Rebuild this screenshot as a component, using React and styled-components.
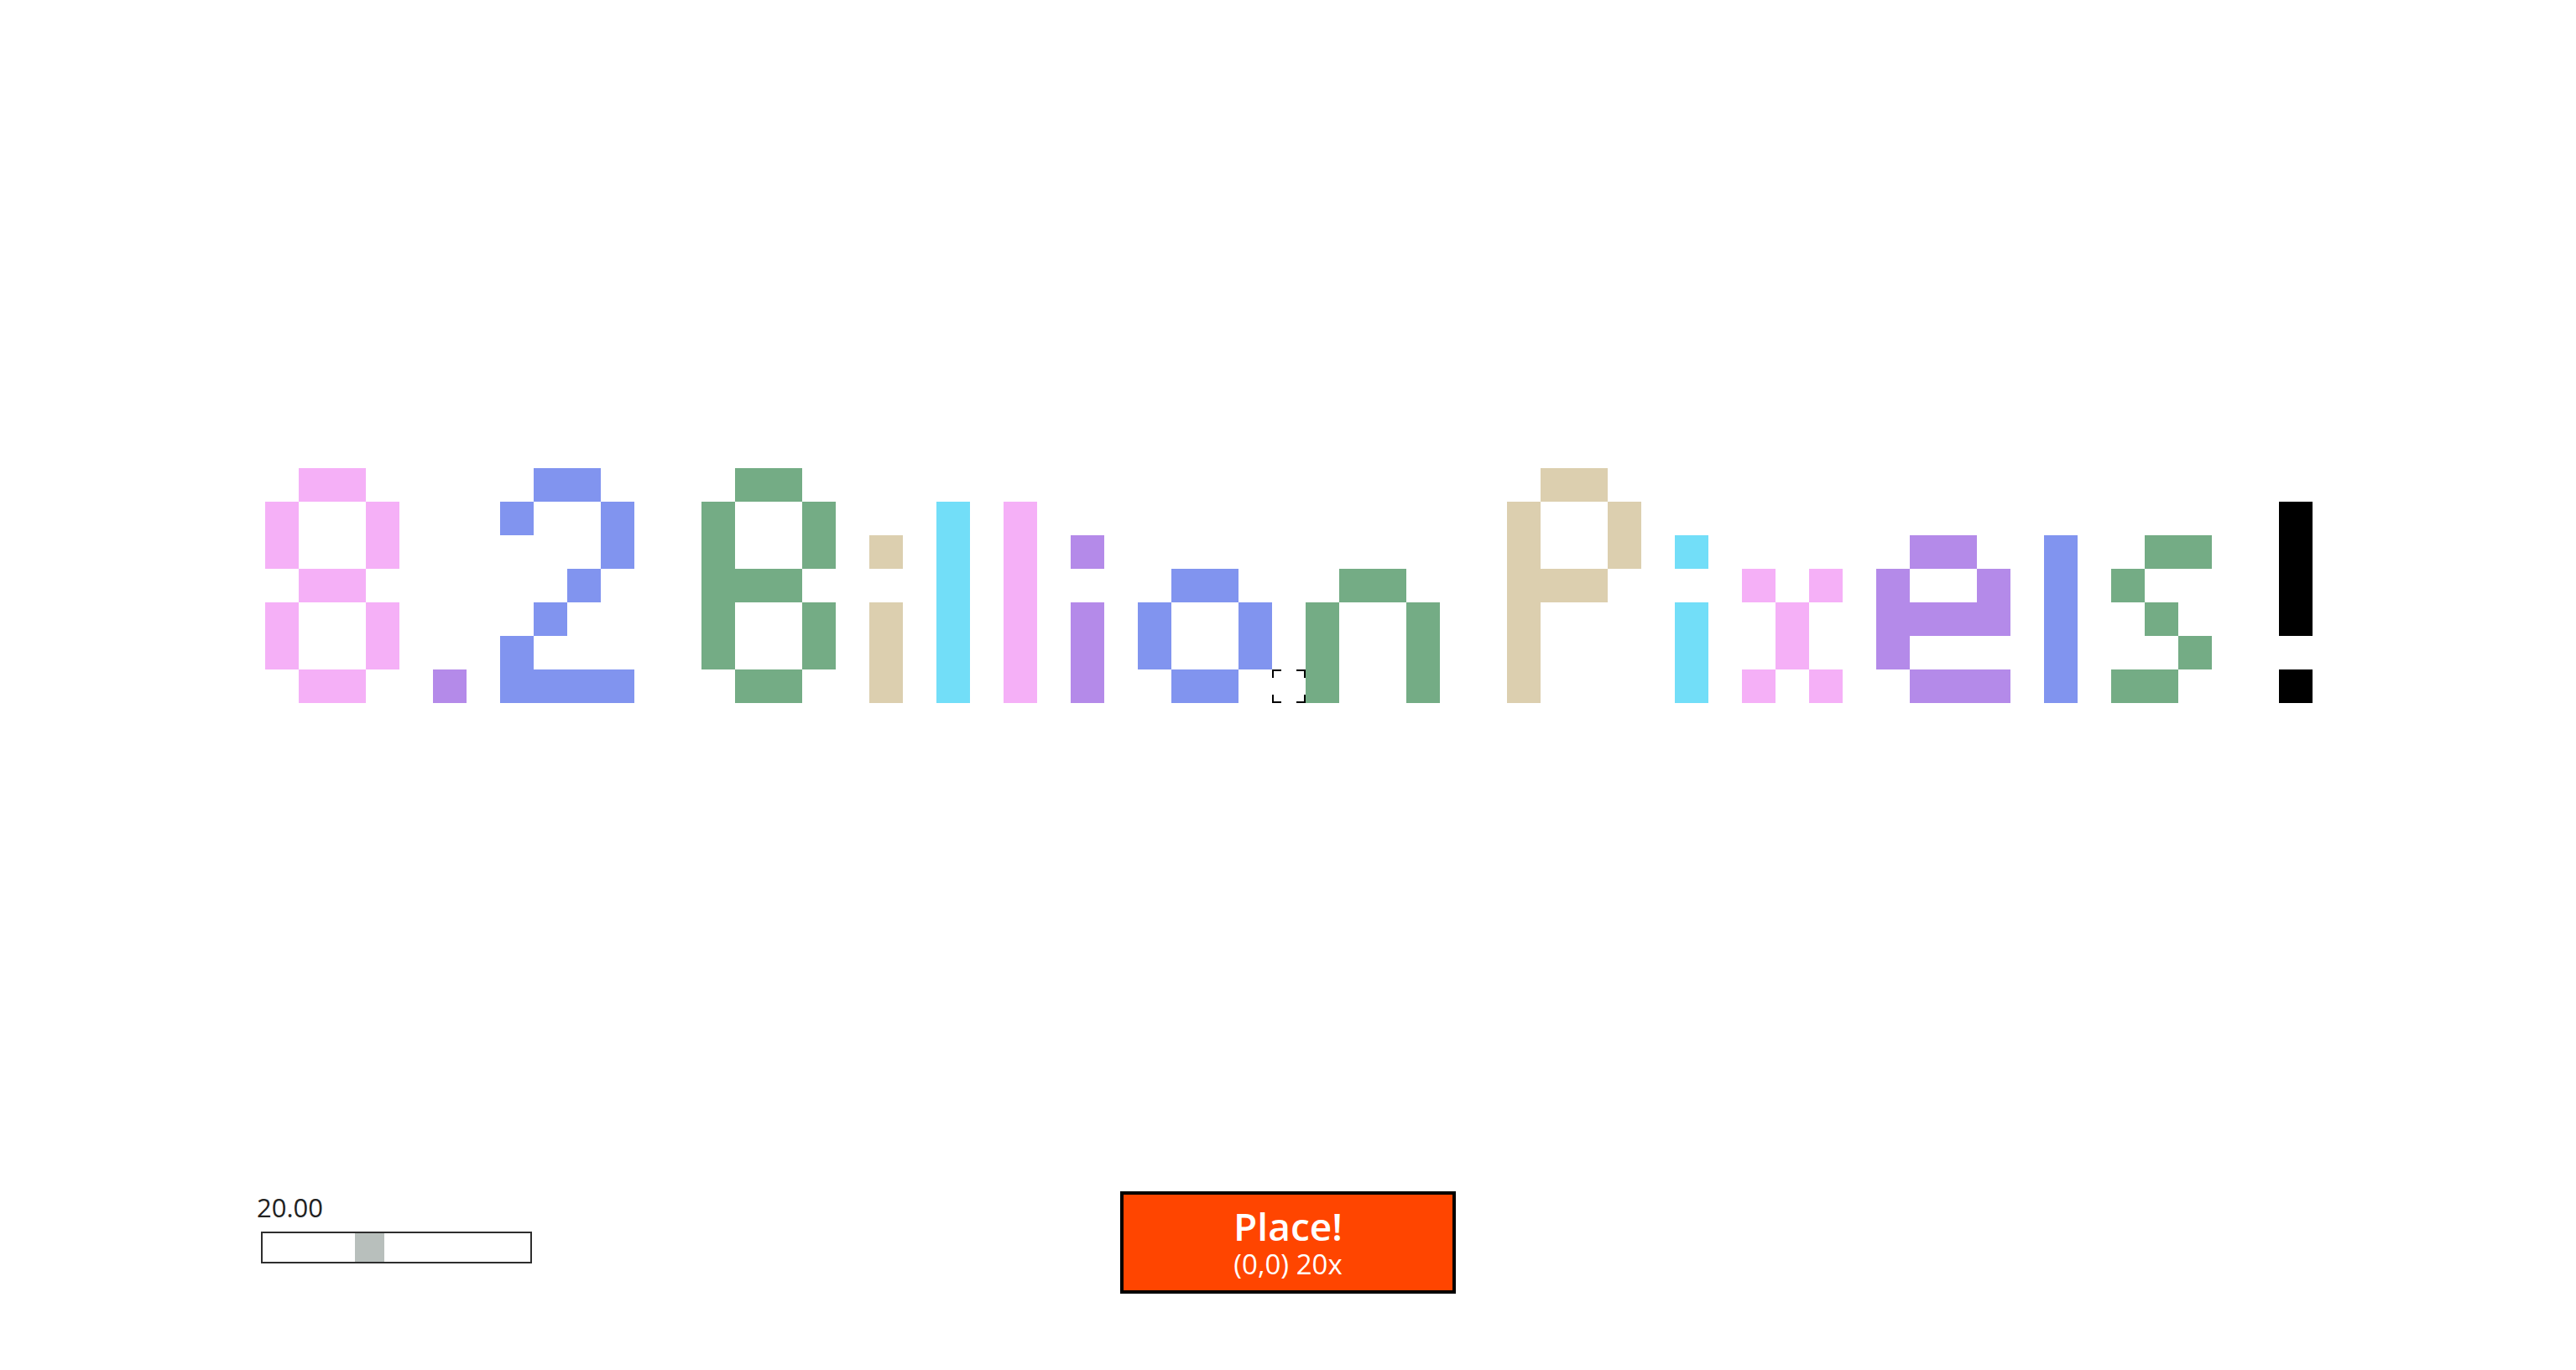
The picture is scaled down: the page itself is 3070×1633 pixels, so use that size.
import React, { useState } from 'react';
import styled, { createGlobalStyle } from 'styled-components';

const GlobalStyle = createGlobalStyle`
  html, body {
    margin: 0;
    padding: 0;
    background: #fff;
    overflow: hidden;
  }
  body {
    font-family: "Open Sans", "Liberation Sans", sans-serif;
  }
`;

const CELL = 40;
const COLS = 61;
const ROWS = 7;

const PINK = '#f5b0f7';
const BLUE = '#8194ef';
const GREEN = '#74ac85';
const BEIGE = '#dccfaf';
const CYAN = '#72def8';
const PURPLE = '#b48ae9';
const BLACK = '#000';

const I = ['.', '.', '#', '.', '#', '#', '#'];
const L = ['.', '#', '#', '#', '#', '#', '#'];

// "8.2Billion Pixels!" painted on the board, one entry per glyph
const GLYPHS = [
  { col: 0, color: PINK, rows: ['.##.', '#..#', '#..#', '.##.', '#..#', '#..#', '.##.'] },
  { col: 5, color: PURPLE, rows: ['.', '.', '.', '.', '.', '.', '#'] },
  { col: 7, color: BLUE, rows: ['.##.', '#..#', '...#', '..#.', '.#..', '#...', '####'] },
  { col: 13, color: GREEN, rows: ['.##.', '#..#', '#..#', '###.', '#..#', '#..#', '.##.'] },
  { col: 18, color: BEIGE, rows: I },
  { col: 20, color: CYAN, rows: L },
  { col: 22, color: PINK, rows: L },
  { col: 24, color: PURPLE, rows: I },
  { col: 26, color: BLUE, rows: ['....', '....', '....', '.##.', '#..#', '#..#', '.##.'] },
  { col: 31, color: GREEN, rows: ['....', '....', '....', '.##.', '#..#', '#..#', '#..#'] },
  { col: 37, color: BEIGE, rows: ['.##.', '#..#', '#..#', '###.', '#...', '#...', '#...'] },
  { col: 42, color: CYAN, rows: I },
  { col: 44, color: PINK, rows: ['...', '...', '...', '#.#', '.#.', '.#.', '#.#'] },
  { col: 48, color: PURPLE, rows: ['....', '....', '.##.', '#..#', '####', '#...', '.###'] },
  { col: 53, color: BLUE, rows: ['.', '.', '#', '#', '#', '#', '#'] },
  { col: 55, color: GREEN, rows: ['...', '...', '.##', '#..', '.#.', '..#', '##.'] },
  { col: 60, color: BLACK, rows: ['.', '#', '#', '#', '#', '.', '#'] },
];

const CURSOR = { col: 30, row: 6 };

const buildBoard = () => {
  const board = Array.from({ length: ROWS }, () => Array(COLS).fill(null));
  GLYPHS.forEach(({ col, color, rows }) => {
    rows.forEach((line, r) => {
      [...line].forEach((ch, c) => {
        if (ch === '#') board[r][col + c] = color;
      });
    });
  });
  return board;
};

const Page = styled.div`
  height: 100vh;
  display: flex;
  flex-direction: column;
`;

const Canvas = styled.main`
  flex: 1;
  display: flex;
  justify-content: center;
  align-items: flex-start;
  padding: 558px 0 0 2px;
`;

const PixelGrid = styled.div`
  display: grid;
  grid-template-columns: repeat(${COLS}, ${CELL}px);
  grid-auto-rows: ${CELL}px;
`;

const Pixel = styled.div`
  background: ${(p) => p.$color || 'transparent'};
  display: flex;
`;

const Toolbar = styled.footer`
  height: 215px;
  display: grid;
  grid-template-columns: 1fr auto 1fr;
  align-items: start;
`;

const ZoomControl = styled.div`
  justify-self: start;
  padding-left: 306px;
  display: flex;
  flex-direction: column;
  gap: 8px;
`;

const ZoomValue = styled.span`
  font-size: 31px;
  line-height: 42px;
  color: #222;
`;

const Slider = styled.input`
  -webkit-appearance: none;
  appearance: none;
  box-sizing: border-box;
  margin: 0 0 0 5px;
  padding: 0;
  width: 323px;
  height: 38px;
  border: 2px solid #2e2e2e;
  background: #fff;
  outline: none;

  &::-webkit-slider-runnable-track {
    height: 34px;
    background: transparent;
  }

  &::-webkit-slider-thumb {
    -webkit-appearance: none;
    width: 35px;
    height: 34px;
    border: none;
    border-radius: 0;
    background: #b8bfbc;
  }

  &::-moz-range-thumb {
    width: 35px;
    height: 34px;
    border: none;
    border-radius: 0;
    background: #b8bfbc;
  }
`;

const PlaceButton = styled.button`
  margin-top: 2px;
  box-sizing: border-box;
  width: 400px;
  height: 122px;
  padding: 0;
  border: 4px solid #000;
  background: #ff4500;
  color: #fff;
  font-family: "Open Sans", "Liberation Sans", sans-serif;
  display: flex;
  flex-direction: column;
  align-items: center;
  justify-content: center;
  cursor: pointer;
`;

const ButtonTitle = styled.span`
  font-size: 46px;
  font-weight: 600;
  line-height: 52px;
`;

const ButtonSub = styled.span`
  font-size: 33px;
  font-weight: 500;
  line-height: 40px;
`;

const Cursor = () => (
  <svg width={CELL} height={CELL} viewBox="0 0 40 40" fill="none" stroke="#000" strokeWidth="2">
    <path d="M1 10V1h10" />
    <path d="M29 1h10v9" />
    <path d="M1 30v9h10" />
    <path d="M29 39h10v-9" />
  </svg>
);

const App = () => {
  const [zoom, setZoom] = useState(20);
  const board = buildBoard();

  return (
    <Page>
      <GlobalStyle />
      <Canvas>
        <PixelGrid>
          {board.map((row, r) =>
            row.map((color, c) => (
              <Pixel key={`${r}-${c}`} $color={color}>
                {r === CURSOR.row && c === CURSOR.col && <Cursor />}
              </Pixel>
            ))
          )}
        </PixelGrid>
      </Canvas>
      <Toolbar>
        <ZoomControl>
          <ZoomValue>{zoom.toFixed(2)}</ZoomValue>
          <Slider
            type="range"
            min={1}
            max={50}
            step={1}
            value={zoom}
            onChange={(e) => setZoom(Number(e.target.value))}
          />
        </ZoomControl>
        <PlaceButton>
          <ButtonTitle>Place!</ButtonTitle>
          <ButtonSub>{`(0,0) ${zoom}x`}</ButtonSub>
        </PlaceButton>
        <div />
      </Toolbar>
    </Page>
  );
};

export default App;
